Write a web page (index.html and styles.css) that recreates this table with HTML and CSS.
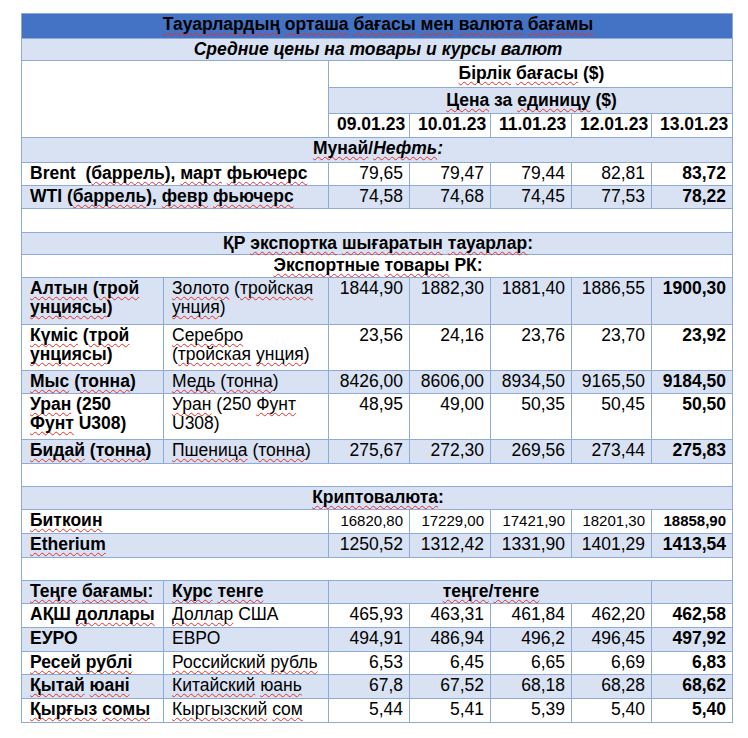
FILE: index.html
```html
<!DOCTYPE html>
<html lang="kk">
<head>
<meta charset="utf-8">
<title>Тауарлардың орташа бағасы</title>
<link rel="stylesheet" href="styles.css">
</head>
<body>
<table class="prices">
  <colgroup>
    <col class="c-kz"><col class="c-ru"><col class="c-v"><col class="c-v"><col class="c-v"><col class="c-v4"><col class="c-v">
  </colgroup>
  <tbody>
    <tr class="h25 title"><td colspan="7" class="ctr b"><span class="sp">Тауарлардың</span> <span class="sp">орташа</span> <span class="sp">бағасы</span> <span class="sp">мен</span> <span class="sp">валюта</span> <span class="sp">бағамы</span></td></tr>
    <tr class="h22 lt"><td colspan="7" class="ctr b i">Средние цены на товары и курсы валют</td></tr>
    <tr class="h27"><td colspan="2" rowspan="3" class="wh"></td><td colspan="5" class="ctr b hd"><span class="sp">Бірлік</span> <span class="sp">бағасы</span> ($)</td></tr>
    <tr class="h26 lt"><td colspan="5" class="ctr b hd"><span class="sp">Цена</span> за <span class="sp">единицу</span> ($)</td></tr>
    <tr class="h24 dates"><td>09.01.23</td><td>10.01.23</td><td>11.01.23</td><td>12.01.23</td><td>13.01.23</td></tr>

    <tr class="h25 lt"><td colspan="7" class="ctr b"><span class="sp">Мунай</span>/<span class="sp i">Нефть</span><span class="i">:</span></td></tr>
    <tr class="h23"><td colspan="2" class="b">Brent&nbsp; (<span class="sp">баррель</span>), <span class="sp">март</span> <span class="sp">фьючерс</span></td><td class="n">79,65</td><td class="n">79,47</td><td class="n">79,44</td><td class="n">82,81</td><td class="n b">83,72</td></tr>
    <tr class="h23 lt"><td colspan="2" class="b">WTI (<span class="sp">баррель</span>), <span class="sp">февр</span> <span class="sp">фьючерс</span></td><td class="n">74,58</td><td class="n">74,68</td><td class="n">74,45</td><td class="n">77,53</td><td class="n b">78,22</td></tr>
    <tr class="h24"><td colspan="7"></td></tr>
    <tr class="h22 lt"><td colspan="7" class="ctr b">ҚР <span class="sp">экспортка</span> <span class="sp">шығаратын</span> <span class="sp">тауарлар</span>:</td></tr>
    <tr class="h23"><td colspan="7" class="ctr b"><span class="sp">Экспортные</span> <span class="sp">товары</span> РК:</td></tr>

    <tr class="h47 lt"><td class="b"><span class="sp">Алтын</span> (<span class="sp">трой</span> <span class="sp">унциясы</span>)</td><td><span class="sp">Золото</span> (<span class="sp">тройская</span> <span class="sp">унция</span>)</td><td class="n">1844,90</td><td class="n">1882,30</td><td class="n">1881,40</td><td class="n">1886,55</td><td class="n b">1900,30</td></tr>
    <tr class="h46"><td class="b"><span class="sp">Күміс</span> (<span class="sp">трой</span> <span class="sp">унциясы</span>)</td><td><span class="sp">Серебро</span> (<span class="sp">тройская</span> <span class="sp">унция</span>)</td><td class="n">23,56</td><td class="n">24,16</td><td class="n">23,76</td><td class="n">23,70</td><td class="n b">23,92</td></tr>
    <tr class="h23 lt"><td class="b"><span class="sp">Мыс</span> (<span class="sp">тонна</span>)</td><td><span class="sp">Медь</span> (<span class="sp">тонна</span>)</td><td class="n">8426,00</td><td class="n">8606,00</td><td class="n">8934,50</td><td class="n">9165,50</td><td class="n b">9184,50</td></tr>
    <tr class="h46"><td class="b"><span class="sp">Уран</span> (250 <span class="sp">Фунт</span> U308)</td><td><span class="sp">Уран</span> (250 <span class="sp">Фунт</span> U308)</td><td class="n">48,95</td><td class="n">49,00</td><td class="n">50,35</td><td class="n">50,45</td><td class="n b">50,50</td></tr>
    <tr class="h24 lt"><td class="b"><span class="sp">Бидай</span> (<span class="sp">тонна</span>)</td><td><span class="sp">Пшеница</span> (<span class="sp">тонна</span>)</td><td class="n">275,67</td><td class="n">272,30</td><td class="n">269,56</td><td class="n">273,44</td><td class="n b">275,83</td></tr>
    <tr class="h23"><td colspan="7"></td></tr>

    <tr class="h23 lt"><td colspan="7" class="ctr b"><span class="sp">Криптовалюта</span>:</td></tr>
    <tr class="h24 small"><td colspan="2" class="b big"><span class="sp">Биткоин</span></td><td class="n">16820,80</td><td class="n">17229,00</td><td class="n">17421,90</td><td class="n">18201,30</td><td class="n b">18858,90</td></tr>
    <tr class="h24 lt"><td colspan="2" class="b"><span class="sp">Etherium</span></td><td class="n">1250,52</td><td class="n">1312,42</td><td class="n">1331,90</td><td class="n">1401,29</td><td class="n b">1413,54</td></tr>
    <tr class="h23"><td colspan="7"></td></tr>

    <tr class="h23 lt"><td class="b"><span class="sp">Теңге</span> <span class="sp">бағамы</span>:</td><td class="b"><span class="sp">Курс</span> <span class="sp">тенге</span></td><td colspan="4" class="ctr b"><span class="sp">теңге</span>/<span class="sp">тенге</span></td><td></td></tr>
    <tr class="h24"><td class="b">АҚШ <span class="sp">доллары</span></td><td><span class="sp">Доллар</span> США</td><td class="n">465,93</td><td class="n">463,31</td><td class="n">461,84</td><td class="n">462,20</td><td class="n b">462,58</td></tr>
    <tr class="h24 lt"><td class="b">ЕУРО</td><td>ЕВРО</td><td class="n">494,91</td><td class="n">486,94</td><td class="n">496,2</td><td class="n">496,45</td><td class="n b">497,92</td></tr>
    <tr class="h23"><td class="b"><span class="sp">Ресей</span> <span class="sp">рублі</span></td><td><span class="sp">Российский</span> <span class="sp">рубль</span></td><td class="n">6,53</td><td class="n">6,45</td><td class="n">6,65</td><td class="n">6,69</td><td class="n b">6,83</td></tr>
    <tr class="h24 lt"><td class="b"><span class="sp">Қытай</span> <span class="sp">юані</span></td><td><span class="sp">Китайский</span> <span class="sp">юань</span></td><td class="n">67,8</td><td class="n">67,52</td><td class="n">68,18</td><td class="n">68,28</td><td class="n b">68,62</td></tr>
    <tr class="h24"><td class="b"><span class="sp">Қырғыз</span> <span class="sp">сомы</span></td><td><span class="sp">Кыргызский</span> <span class="sp">сом</span></td><td class="n">5,44</td><td class="n">5,41</td><td class="n">5,39</td><td class="n">5,40</td><td class="n b">5,40</td></tr>
  </tbody>
</table>
</body>
</html>
```
FILE: styles.css
```css
html, body {
  margin: 0;
  padding: 0;
  background: #ffffff;
}
body {
  padding: 13px 0 0 21px;
  font-family: "Liberation Sans", Arial, sans-serif;
  font-size: 17.5px;
  color: #000;
}
.prices {
  border-collapse: collapse;
  table-layout: fixed;
  width: 712px;
}
.c-kz { width: 142px; }
.c-ru { width: 165px; }
.c-v { width: 81px; }
.c-v4 { width: 80px; }

.prices td {
  border: 1px solid #8eaadb;
  padding: 1px 6px 0 8px;
  vertical-align: top;
  line-height: 19px;
  background: #ffffff;
}
.prices td.hd { padding-top: 3px; }
.prices tr.lt td { background: #d9e2f3; }
.prices tr.lt td.wh, .prices td.wh { background: #ffffff; }
.prices tr.title td { background: #4472c4; }

.h22 { height: 22px; }
.h23 { height: 23px; }
.h24 { height: 24px; }
.h25 { height: 25px; }
.h26 { height: 26px; }
.h27 { height: 27px; }
.h46 { height: 46px; }
.h47 { height: 47px; }

.ctr { text-align: center; }
.b { font-weight: bold; }
.i { font-style: italic; }
.n { text-align: right; }
.dates td { text-align: center; font-weight: bold; }
.small td.n { font-size: 15px; }
.small td.big { font-size: 17.5px; }

.sp {
  text-decoration-line: underline;
  text-decoration-style: wavy;
  text-decoration-color: #e0302a;
  text-decoration-thickness: 1px;
  text-underline-offset: 2px;
  text-decoration-skip-ink: none;
}
```
